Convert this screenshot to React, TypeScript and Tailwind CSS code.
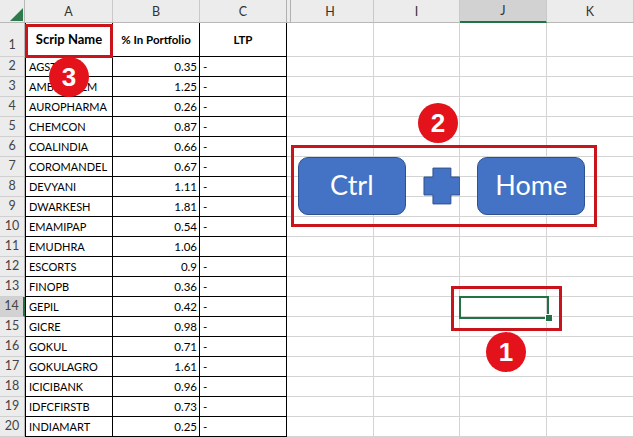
const rows: [string, string, string][] = [
  ['AGSTRA', '0.35', '-'],
  ['AMBUJACEM', '1.25', '-'],
  ['AUROPHARMA', '0.26', '-'],
  ['CHEMCON', '0.87', '-'],
  ['COALINDIA', '0.66', '-'],
  ['COROMANDEL', '0.67', '-'],
  ['DEVYANI', '1.11', '-'],
  ['DWARKESH', '1.81', '-'],
  ['EMAMIPAP', '0.54', '-'],
  ['EMUDHRA', '1.06', ''],
  ['ESCORTS', '0.9', '-'],
  ['FINOPB', '0.36', '-'],
  ['GEPIL', '0.42', '-'],
  ['GICRE', '0.98', '-'],
  ['GOKUL', '0.71', '-'],
  ['GOKULAGRO', '1.61', '-'],
  ['ICICIBANK', '0.96', '-'],
  ['IDFCFIRSTB', '0.73', '-'],
  ['INDIAMART', '0.25', '-'],
];

const font = { fontFamily: 'Lato, "Liberation Sans", sans-serif' };

function Badge({ n, className }: { n: string; className: string }) {
  return (
    <div
      className={`absolute w-10 h-10 rounded-full bg-[#e3121b] text-white flex items-center justify-center text-[26px] font-bold leading-none ${className}`}
      style={{ fontFamily: '"Liberation Sans", Arial, sans-serif' }}
    >
      {n}
    </div>
  );
}

function ColHead({ label, active, extra = '' }: { label: string; active?: boolean; extra?: string }) {
  return (
    <div
      className={`flex items-center justify-center pt-[2px] text-[12.5px] text-[#333] border-r border-[#c9c9c9] ${
        active ? 'bg-[#d2d2d2] border-b-2 border-b-[#217346]' : 'bg-[#ececec] border-b border-b-[#b8b8b8]'
      } ${extra}`}
    >
      {label}
    </div>
  );
}

function RowHead({ n, active, tall }: { n: number; active?: boolean; tall?: boolean }) {
  return (
    <div
      className={`flex justify-center text-[12.5px] text-[#444] border-b border-[#d0d0d0] ${
        tall ? 'items-end pb-[1px]' : 'items-center'
      } ${active ? 'bg-[#d2d2d2] border-r-2 border-r-[#217346]' : 'bg-[#ececec] border-r border-r-[#b8b8b8]'}`}
    >
      {n}
    </div>
  );
}

function Empty() {
  return <div className="border-r border-b border-[#d4d4d4]" />;
}

export default function App() {
  return (
    <div className="relative w-[634px] h-[437px] overflow-hidden bg-white" style={font}>
      <div className="grid grid-cols-[25px_88px_87px_87px_87px_86px_87px_87px] grid-rows-[23px_34px_repeat(19,20px)]">
        {/* column headers */}
        <div className="relative bg-[#ececec] border-r border-b border-[#b8b8b8]">
          <svg className="absolute left-[10px] top-[8px]" width="13" height="13" viewBox="0 0 13 13">
            <polygon points="13,0 13,13 0,13" fill="#2f7a4d" />
          </svg>
        </div>
        <ColHead label="A" />
        <ColHead label="B" />
        <ColHead label="C" extra="border-r-[#b0b0b0]" />
        <ColHead label="H" extra="shadow-[inset_3px_0_0_#ececec,inset_4px_0_0_#b0b0b0]" />
        <ColHead label="I" />
        <ColHead label="J" active />
        <ColHead label="K" />

        {/* row 1 */}
        <RowHead n={1} tall />
        <div className="flex items-center justify-center border-l border-r border-b border-black text-[13px] font-bold text-black">
          Scrip Name
        </div>
        <div className="flex items-center justify-center border-r border-b border-black text-[11.5px] font-bold text-black">
          % In Portfolio
        </div>
        <div className="flex items-center justify-center border-r border-b border-black text-[11.5px] font-bold text-black">
          LTP
        </div>
        <Empty />
        <Empty />
        <Empty />
        <Empty />

        {rows.map(([name, pct, ltp], i) => (
          <div key={name} className="contents">
            <RowHead n={i + 2} active={i + 2 === 14} />
            <div className="flex items-center pl-[3px] pt-[1px] border-l border-r border-b border-black text-[11px] text-black">
              {name}
            </div>
            <div className="flex items-center justify-end pr-[2px] pt-[1px] border-r border-b border-black text-[11.5px] text-black">
              {pct}
            </div>
            <div className="flex items-center pl-[3px] pt-[1px] border-r border-b border-black text-[11.5px] text-black">
              {ltp}
            </div>
            <Empty />
            <Empty />
            <Empty />
            <Empty />
          </div>
        ))}
      </div>

      {/* annotation 3 */}
      <div className="absolute left-[25px] top-[24px] w-[88px] h-[34px] border-[3px] border-[#c8141a]" />
      <Badge n="3" className="left-[49px] top-[57px]" />

      {/* annotation 2: Ctrl + Home */}
      <div className="absolute left-[291px] top-[145px] w-[306px] h-[82px] border-[3px] border-[#c8141a] flex items-center pl-[4px] pr-[9px] gap-[18px]">
        <div className="w-[108px] h-[58px] rounded-[10px] bg-[#4472c4] border border-[#2f528f] flex items-center justify-center text-white text-[27px] pb-[2px]">
          Ctrl
        </div>
        <svg width="38" height="38" viewBox="0 0 38 38" className="mx-[-1px]">
          <polygon
            points="10,1 28,1 28,10 37,10 37,28 28,28 28,37 10,37 10,28 1,28 1,10 10,10"
            fill="#4472c4"
            stroke="#2f528f"
            strokeWidth="1"
          />
        </svg>
        <div className="w-[108px] h-[58px] rounded-[10px] bg-[#4472c4] border border-[#2f528f] flex items-center justify-center text-white text-[27px] pb-[2px]">
          Home
        </div>
      </div>
      <Badge n="2" className="left-[418px] top-[103px]" />

      {/* annotation 1: selected cell J14 */}
      <div className="absolute left-[459px] top-[296px] w-[90px] h-[23px] border-2 border-[#217346]" />
      <div className="absolute left-[545px] top-[314px] w-[6px] h-[6px] bg-[#217346] border border-white box-content" />
      <div className="absolute left-[451px] top-[286px] w-[111px] h-[45px] border-[3px] border-[#c8141a]" />
      <Badge n="1" className="left-[486px] top-[332px]" />
    </div>
  );
}
